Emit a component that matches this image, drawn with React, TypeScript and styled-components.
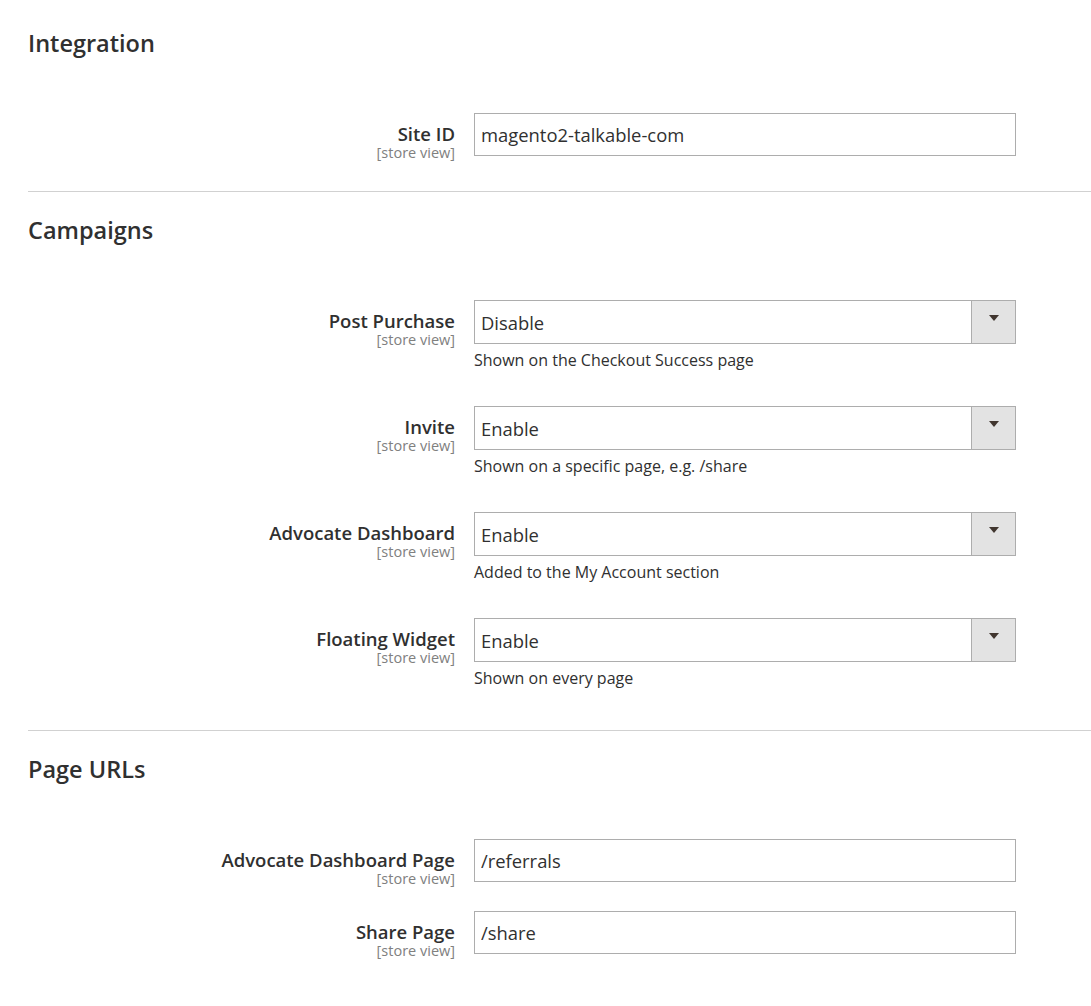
import styled, { createGlobalStyle } from "styled-components";

const GlobalStyle = createGlobalStyle`
    body {
        margin: 0;
        background: #ffffff;
        font-family: "Open Sans", "Liberation Sans", sans-serif;
        color: #303030;
    }
`;

const Page = styled.div`
    padding: 28px 0 40px 28px;
`;

const Section = styled.section<{ divided?: boolean }>`
    border-top: ${(props) => (props.divided ? "1px solid #d1d1d1" : "none")};
    padding-top: ${(props) => (props.divided ? "23px" : "0")};
    padding-bottom: 6px;
`;

const SectionTitle = styled.h2`
    margin: 0 0 55px;
    font-size: 23.5px;
    line-height: 30px;
    font-weight: 600;
    color: #303030;
`;

const Row = styled.div`
    display: grid;
    grid-template-columns: 427px 542px;
    column-gap: 19px;
    align-items: start;
    padding-bottom: 29px;
`;

// label block is a bit taller than a plain input; let it hang below
const LabelCell = styled.div`
    padding-top: 10px;
    margin-bottom: -10px;
    text-align: right;
`;

const Label = styled.label`
    display: block;
    font-size: 18.5px;
    line-height: 21px;
    font-weight: 600;
    color: #303030;
`;

const Scope = styled.div`
    font-size: 14.5px;
    line-height: 17px;
    color: #808080;
`;

const TextInput = styled.input`
    box-sizing: border-box;
    width: 100%;
    height: 43px;
    margin: 0;
    padding: 0 8px 0 6px;
    border: 1px solid #adadad;
    border-radius: 0;
    font-family: "Open Sans", "Liberation Sans", sans-serif;
    font-size: 18.4px;
    color: #303030;
    background: #ffffff;
    outline: none;
`;

const SelectWrap = styled.div`
    position: relative;
    height: 44px;
`;

const Select = styled.select`
    box-sizing: border-box;
    width: 100%;
    height: 44px;
    margin: 0;
    padding: 0 50px 0 6px;
    border: 1px solid #adadad;
    border-radius: 0;
    font-family: "Open Sans", "Liberation Sans", sans-serif;
    font-size: 18.4px;
    color: #303030;
    background: #ffffff;
    appearance: none;
    -webkit-appearance: none;
    outline: none;
`;

const ArrowBox = styled.span`
    position: absolute;
    top: 1px;
    right: 1px;
    bottom: 1px;
    width: 44px;
    box-sizing: border-box;
    border-left: 1px solid #adadad;
    background: #e3e3e3;
    display: flex;
    justify-content: center;
    align-items: flex-start;
    padding-top: 14px;
    pointer-events: none;

    &::after {
        content: "";
        width: 0;
        height: 0;
        border-left: 5px solid transparent;
        border-right: 5px solid transparent;
        border-top: 6px solid #41362f;
    }
`;

const Note = styled.div`
    margin: 6px 0 7px;
    font-size: 16px;
    line-height: 20px;
    color: #303030;
`;

type FieldProps = {
    label: string;
    value: string;
    note?: string;
    options?: string[];
};

function Field({ label, value, note, options }: FieldProps) {
    return (
        <Row>
            <LabelCell>
                <Label>{label}</Label>
                <Scope>[store view]</Scope>
            </LabelCell>
            <div>
                {options ? (
                    <SelectWrap>
                        <Select defaultValue={value}>
                            {options.map((o) => (
                                <option key={o} value={o}>{o}</option>
                            ))}
                        </Select>
                        <ArrowBox />
                    </SelectWrap>
                ) : (
                    <TextInput type="text" defaultValue={value} />
                )}
                {note && <Note>{note}</Note>}
            </div>
        </Row>
    );
}

const toggle = ["Enable", "Disable"];

export default function App() {
    return (
        <>
            <GlobalStyle />
            <Page>
                <Section>
                    <SectionTitle>Integration</SectionTitle>
                    <Field label="Site ID" value="magento2-talkable-com" />
                </Section>

                <Section divided>
                    <SectionTitle>Campaigns</SectionTitle>
                    <Field label="Post Purchase" value="Disable" options={toggle} note="Shown on the Checkout Success page" />
                    <Field label="Invite" value="Enable" options={toggle} note="Shown on a specific page, e.g. /share" />
                    <Field label="Advocate Dashboard" value="Enable" options={toggle} note="Added to the My Account section" />
                    <Field label="Floating Widget" value="Enable" options={toggle} note="Shown on every page" />
                </Section>

                <Section divided>
                    <SectionTitle>Page URLs</SectionTitle>
                    <Field label="Advocate Dashboard Page" value="/referrals" />
                    <Field label="Share Page" value="/share" />
                </Section>
            </Page>
        </>
    );
}
